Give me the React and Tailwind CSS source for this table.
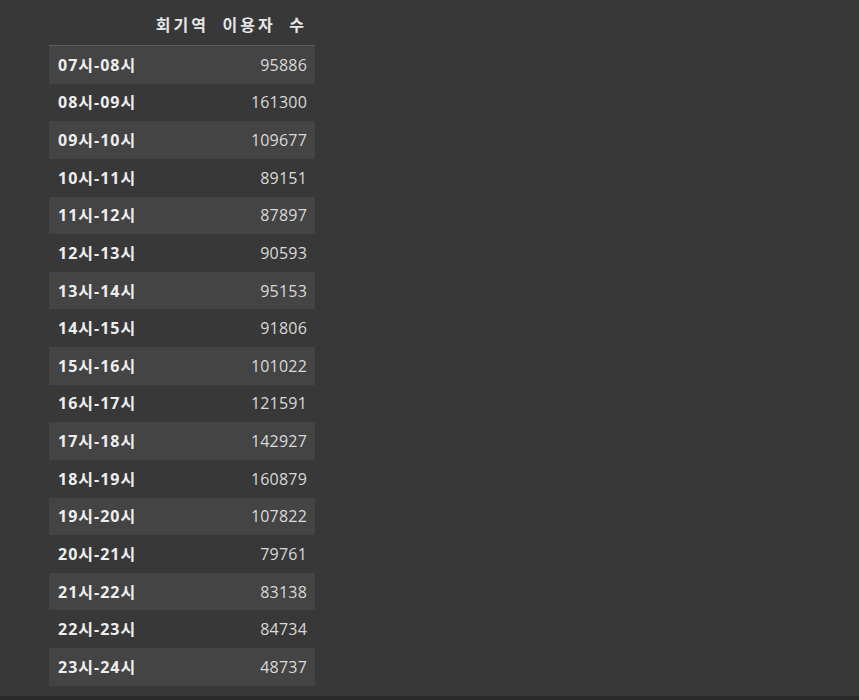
export default function App() {
  const rows = [
    ["07시-08시", 95886],
    ["08시-09시", 161300],
    ["09시-10시", 109677],
    ["10시-11시", 89151],
    ["11시-12시", 87897],
    ["12시-13시", 90593],
    ["13시-14시", 95153],
    ["14시-15시", 91806],
    ["15시-16시", 101022],
    ["16시-17시", 121591],
    ["17시-18시", 142927],
    ["18시-19시", 160879],
    ["19시-20시", 107822],
    ["20시-21시", 79761],
    ["21시-22시", 83138],
    ["22시-23시", 84734],
    ["23시-24시", 48737],
  ];
  return (
    <div className="w-[859px] h-[700px] bg-[#383838] flex flex-col overflow-hidden" style={{ fontFamily: '"Open Sans", "Noto Sans CJK KR", sans-serif' }}>
      <div className="flex-1 pl-[49px] pt-[9px]">
        <div className="w-[266px]">
          <div className="h-[37px] flex items-center justify-end pr-[8px] pb-[6px] border-b border-[#5c5c5c] text-[16px] font-semibold tracking-[3px] [word-spacing:7px] text-[#e6e6e6]" style={{ fontFamily: '"Noto Sans CJK KR", sans-serif' }}>
            회기역 이용자 수
          </div>
          {rows.map(([label, value], i) => (
            <div key={label} className={`h-[37.625px] flex items-center justify-between pl-[9px] pr-[8px] text-[16px] ${i % 2 === 0 ? "bg-[#444444]" : ""}`}>
              <span className="font-bold tracking-[1px] text-[#eeeeee]">{label}</span>
              <span className="tracking-[0.2px] text-[#d9d9d9]">{value}</span>
            </div>
          ))}
        </div>
      </div>
      <div className="h-[4px] bg-[#2b2b2b]" />
    </div>
  );
}
